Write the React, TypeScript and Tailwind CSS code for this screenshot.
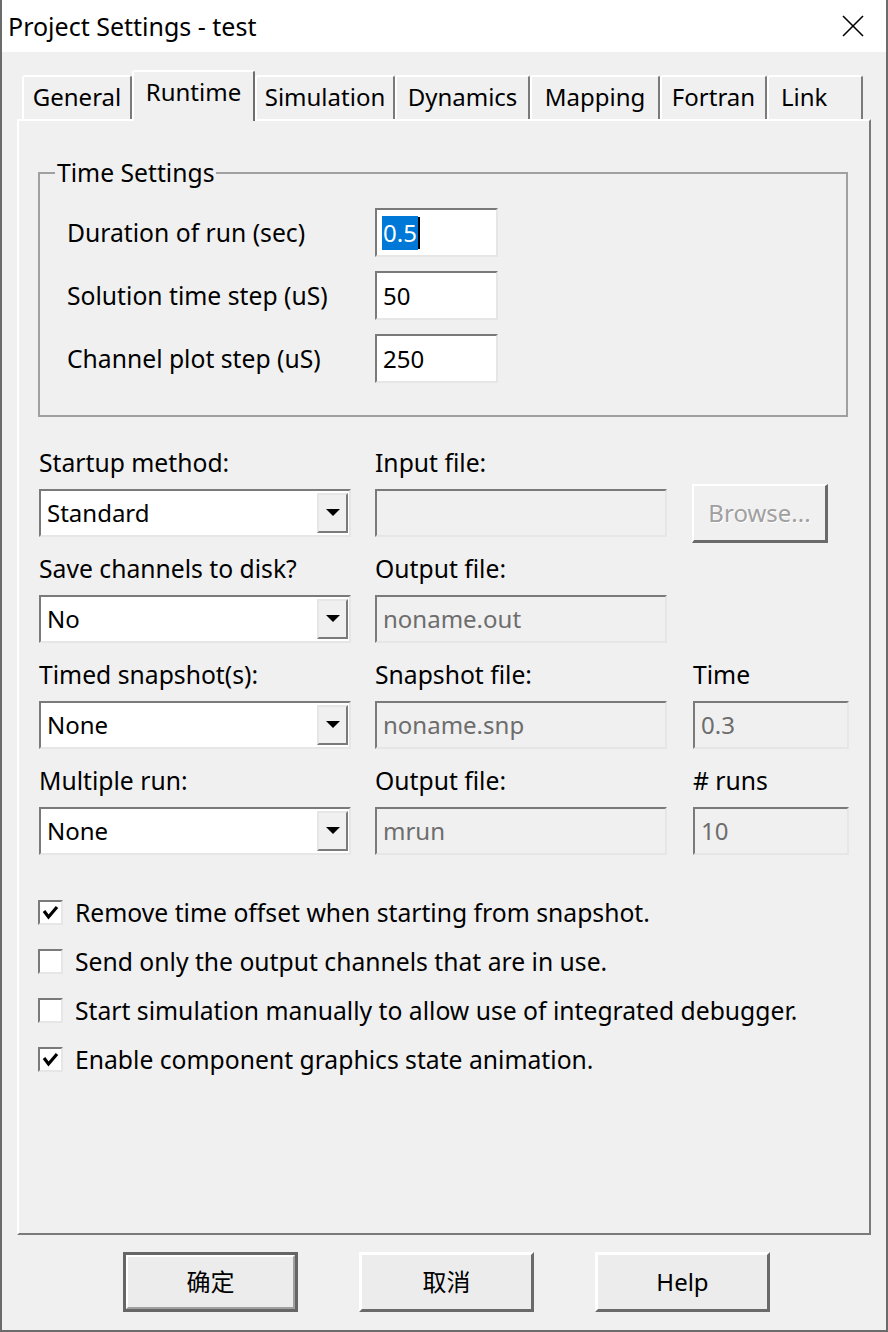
import React from 'react';

const font = "font-['Noto_Sans','Noto_Sans_CJK_SC',sans-serif]";
const sunken = 'border-2 border-t-[#7a7a7a] border-l-[#7a7a7a] border-b-[#e6e6e6] border-r-[#e6e6e6]';
const label = 'text-[24.7px] leading-[32px] text-black';

const tabs = [
  { label: 'General', w: 'w-[110px] justify-center' },
  { label: 'Runtime', w: 'w-[123px] justify-center', active: true },
  { label: 'Simulation', w: 'w-[140px] justify-center' },
  { label: 'Dynamics', w: 'w-[135px] justify-center' },
  { label: 'Mapping', w: 'w-[130px] justify-center' },
  { label: 'Fortran', w: 'w-[107px] justify-center' },
  { label: 'Link', w: 'w-[96px] pl-[12px]' },
];

function Arrow() {
  return (
    <svg width="14" height="8" viewBox="0 0 14 8">
      <polygon points="0,0 14,0 7,7" fill="#000" />
    </svg>
  );
}

function Combo({ value }: { value: string }) {
  return (
    <div className={`w-[312px] h-[48px] bg-white flex items-center ${sunken}`}>
      <span className="flex-1 pl-[6px] text-[24px] leading-[32px] text-black">{value}</span>
      <div className="w-[31px] h-[40px] mr-[1px] bg-[#f0f0f0] flex items-center justify-center border-2 border-t-[#e6e6e6] border-l-[#e6e6e6] border-b-[#7a7a7a] border-r-[#7a7a7a]">
        <Arrow />
      </div>
    </div>
  );
}

function Field({ value, w, disabled }: { value?: string; w: string; disabled?: boolean }) {
  return (
    <div
      className={`${w} h-[48px] flex items-center pl-[6px] text-[24px] leading-[32px] ${sunken} ${
        disabled ? 'bg-[#f0f0f0] text-[#6d6d6d]' : 'bg-white text-black'
      }`}
    >
      {value}
    </div>
  );
}

function Check({ checked, text }: { checked?: boolean; text: string }) {
  return (
    <div className="h-[49px] flex items-center">
      <div className={`w-[25px] h-[25px] bg-white flex items-center justify-center ${sunken}`}>
        {checked && (
          <svg width="17" height="15" viewBox="0 0 17 15">
            <polyline points="2,6 6.5,12 15,2" fill="none" stroke="#000" strokeWidth="3.2" />
          </svg>
        )}
      </div>
      <span className={`ml-[12px] ${label}`}>{text}</span>
    </div>
  );
}

function Button({ text, primary }: { text: string; primary?: boolean }) {
  if (primary) {
    return (
      <div className="w-[175px] h-[60px] border-[3px] border-[#666666] flex">
        <div className="flex-1 flex items-center justify-center bg-[#ececec] border-2 border-t-white border-l-white border-b-[#a0a0a0] border-r-[#a0a0a0] text-[24px] text-black">
          {text}
        </div>
      </div>
    );
  }
  return (
    <div className="w-[175px] h-[60px] flex items-center justify-center bg-[#ececec] border-t-[3px] border-l-[3px] border-t-white border-l-white border-b-[3px] border-r-[3px] border-b-[#6a6a6a] border-r-[#6a6a6a] text-[24px] text-black">
      {text}
    </div>
  );
}

export default function App() {
  return (
    <div className={`${font} w-[888px] h-[1332px] bg-[#f0f0f0] border-l-2 border-r-2 border-b-2 border-[#6b6b6b] flex flex-col`}>
      {/* title bar */}
      <div className="h-[52px] bg-white flex items-center justify-between pl-[6px] pr-[22px]">
        <span className="text-[25px] leading-[32px] text-black">Project Settings - test</span>
        <svg width="22" height="22" viewBox="0 0 22 22">
          <line x1="1" y1="1" x2="21" y2="21" stroke="#000" strokeWidth="1.6" />
          <line x1="21" y1="1" x2="1" y2="21" stroke="#000" strokeWidth="1.6" />
        </svg>
      </div>

      {/* tabs */}
      <div className="mt-[18px] ml-[20px] h-[49px] flex items-end">
        {tabs.map((t) =>
          t.active ? (
            <div
              key={t.label}
              className={`${t.w} h-[51px] -mb-[2px] relative z-10 bg-[#f0f0f0] rounded-t-[3px] border-t-2 border-l-2 border-r-2 border-t-white border-l-white border-r-[#6e6e6e] flex pt-[4px] text-[24px] leading-[32px] text-black`}
            >
              {t.label}
            </div>
          ) : (
            <div
              key={t.label}
              className={`${t.w} h-[44px] bg-[#f0f0f0] rounded-t-[3px] border-t-2 border-l-2 border-r-2 border-t-white border-l-white border-r-[#7a7a7a] flex pt-[4px] text-[24px] leading-[32px] text-black`}
            >
              {t.label}
            </div>
          )
        )}
      </div>

      {/* tab panel */}
      <div className="ml-[15px] w-[854px] h-[1116px] border-2 border-t-white border-l-white border-b-[#7a7a7a] border-r-[#7a7a7a] flex flex-col">
        <fieldset className="mt-[36px] ml-[19px] w-[810px] border-2 border-[#a0a0a0] p-0 m-0">
          <legend className={`ml-[15px] px-[2px] ${label}`}>Time Settings</legend>
          <div className="pt-[19px] pb-[32px] pl-[27px] flex flex-col gap-[14px]">
            {[
              { name: 'Duration of run (sec)', value: '0.5', sel: true },
              { name: 'Solution time step (uS)', value: '50' },
              { name: 'Channel plot step (uS)', value: '250' },
            ].map((r) => (
              <div key={r.name} className="flex items-center h-[49px]">
                <span className={`w-[308px] ${label}`}>{r.name}</span>
                <div className={`w-[123px] h-[49px] bg-white flex items-center pl-[5px] text-[24px] text-black ${sunken}`}>
                  {r.sel ? (
                    <>
                      <span className="bg-[#0078d7] text-white leading-[34px] px-[1px]">{r.value}</span>
                      <span className="w-[2px] h-[32px] bg-black" />
                    </>
                  ) : (
                    <span className="pl-[1px] leading-[34px]">{r.value}</span>
                  )}
                </div>
              </div>
            ))}
          </div>
        </fieldset>

        <div className="ml-[20px] mt-[30px] flex flex-col gap-[16px]">
          <div className="flex flex-col gap-[10px]">
            <div className={`flex h-[32px] ${label}`}>
              <span className="w-[336px]">Startup method:</span>
              <span>Input file:</span>
            </div>
            <div className="flex h-[48px] items-center">
              <Combo value="Standard" />
              <div className="ml-[24px]">
                <Field w="w-[292px]" disabled />
              </div>
              <div className="ml-[25px] w-[136px] h-[59px] flex items-center justify-center bg-[#f0f0f0] border-t-2 border-l-2 border-t-white border-l-white border-b-[3px] border-r-[3px] border-b-[#6a6a6a] border-r-[#6a6a6a] text-[24px] text-[#a0a0a0] [text-shadow:1px_1px_0_#ffffff]">
                Browse...
              </div>
            </div>
          </div>

          <div className="flex flex-col gap-[10px]">
            <div className={`flex h-[32px] ${label}`}>
              <span className="w-[336px]">Save channels to disk?</span>
              <span>Output file:</span>
            </div>
            <div className="flex h-[48px] items-center">
              <Combo value="No" />
              <div className="ml-[24px]">
                <Field w="w-[292px]" value="noname.out" disabled />
              </div>
            </div>
          </div>

          <div className="flex flex-col gap-[10px]">
            <div className={`flex h-[32px] ${label}`}>
              <span className="w-[318px] mr-[18px]">Timed snapshot(s):</span>
              <span className="w-[318px]">Snapshot file:</span>
              <span>Time</span>
            </div>
            <div className="flex h-[48px] items-center">
              <Combo value="None" />
              <div className="ml-[24px]">
                <Field w="w-[292px]" value="noname.snp" disabled />
              </div>
              <div className="ml-[26px]">
                <Field w="w-[156px]" value="0.3" disabled />
              </div>
            </div>
          </div>

          <div className="flex flex-col gap-[10px]">
            <div className={`flex h-[32px] ${label}`}>
              <span className="w-[336px]">Multiple run:</span>
              <span className="w-[318px]">Output file:</span>
              <span># runs</span>
            </div>
            <div className="flex h-[48px] items-center">
              <Combo value="None" />
              <div className="ml-[24px]">
                <Field w="w-[292px]" value="mrun" disabled />
              </div>
              <div className="ml-[26px]">
                <Field w="w-[156px]" value="10" disabled />
              </div>
            </div>
          </div>
        </div>

        <div className="ml-[19px] mt-[33px] flex flex-col">
          <Check checked text="Remove time offset when starting from snapshot." />
          <Check text="Send only the output channels that are in use." />
          <Check text="Start simulation manually to allow use of integrated debugger." />
          <Check checked text="Enable component graphics state animation." />
        </div>
      </div>

      {/* dialog buttons */}
      <div className="mt-[17px] ml-[121px] flex gap-[61px]">
        <Button text="确定" primary />
        <Button text="取消" />
        <Button text="Help" />
      </div>
    </div>
  );
}
